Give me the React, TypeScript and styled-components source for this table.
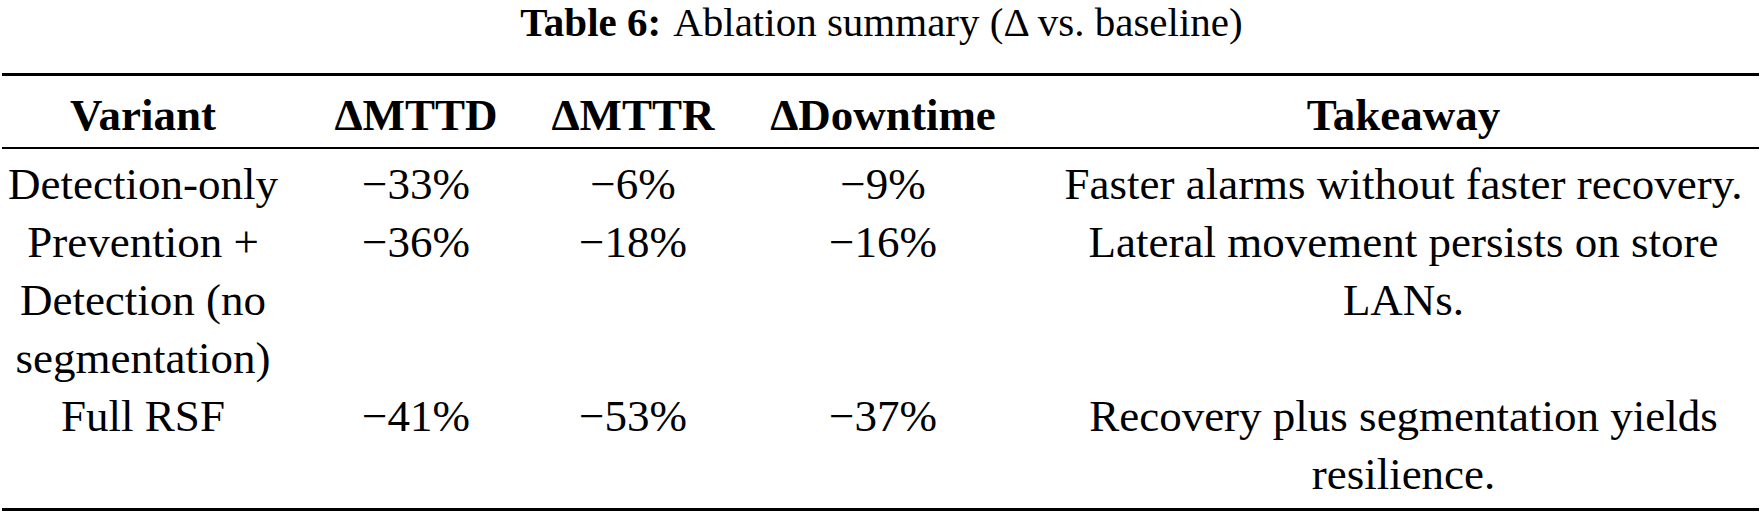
import React from "react";
import styled, { createGlobalStyle } from "styled-components";

const serif = `"Liberation Serif", "Times New Roman", serif`;

const GlobalStyle = createGlobalStyle`
  html, body {
    margin: 0;
    padding: 0;
    background: #ffffff;
  }
  body {
    font-family: ${serif};
    color: #000000;
  }
`;

const Figure = styled.div`
  width: 1757px;
  margin-left: 2px;
  display: flex;
  flex-direction: column;
  font-family: ${serif};
`;

const Caption = styled.div`
  font-family: ${serif};
  font-size: 41px;
  line-height: 44px;
  height: 44px;
  text-align: center;
  padding-left: 2px;
  margin-bottom: 29px;
  white-space: nowrap;
`;

const CaptionLabel = styled.span`
  font-weight: 700;
  margin-right: 12px;
`;

const Grid = styled.div`
  display: grid;
  grid-template-columns: 282px 264px 170px 330px 711px;
  align-items: start;
`;

const Rule = styled.div<{ $weight: number; $above: number; $below: number }>`
  grid-column: 1 / -1;
  height: ${(p) => p.$weight}px;
  background: #000000;
  margin-top: ${(p) => p.$above}px;
  margin-bottom: ${(p) => p.$below}px;
`;

const Cell = styled.div<{ $head?: boolean }>`
  font-family: ${serif};
  font-size: 45px;
  line-height: 58px;
  font-weight: ${(p) => (p.$head ? 700 : 400)};
  text-align: center;
`;

type Row = { variant: string; mttd: string; mttr: string; down: string; takeaway: string };

const rows: Row[] = [
  {
    variant: "Detection-only",
    mttd: "\u221233%",
    mttr: "\u22126%",
    down: "\u22129%",
    takeaway: "Faster alarms without faster recovery.",
  },
  {
    variant: "Prevention + Detection (no segmentation)",
    mttd: "\u221236%",
    mttr: "\u221218%",
    down: "\u221216%",
    takeaway: "Lateral movement persists on store LANs.",
  },
  {
    variant: "Full RSF",
    mttd: "\u221241%",
    mttr: "\u221253%",
    down: "\u221237%",
    takeaway: "Recovery plus segmentation yields resilience.",
  },
];

const headers = ["Variant", "\u0394MTTD", "\u0394MTTR", "\u0394Downtime", "Takeaway"];

export default function App() {
  return (
    <>
      <GlobalStyle />
      <Figure>
        <Caption>
          <CaptionLabel>Table 6:</CaptionLabel>Ablation summary ({"\u0394"} vs. baseline)
        </Caption>
        <Grid>
          <Rule $weight={3} $above={0} $below={10} />
          {headers.map((h) => (
            <Cell key={h} $head>
              {h}
            </Cell>
          ))}
          <Rule $weight={2} $above={3} $below={6} />
          {rows.map((r) => (
            <React.Fragment key={r.variant}>
              <Cell>{r.variant}</Cell>
              <Cell>{r.mttd}</Cell>
              <Cell>{r.mttr}</Cell>
              <Cell>{r.down}</Cell>
              <Cell>{r.takeaway}</Cell>
            </React.Fragment>
          ))}
          <Rule $weight={3} $above={5} $below={0} />
        </Grid>
      </Figure>
    </>
  );
}
